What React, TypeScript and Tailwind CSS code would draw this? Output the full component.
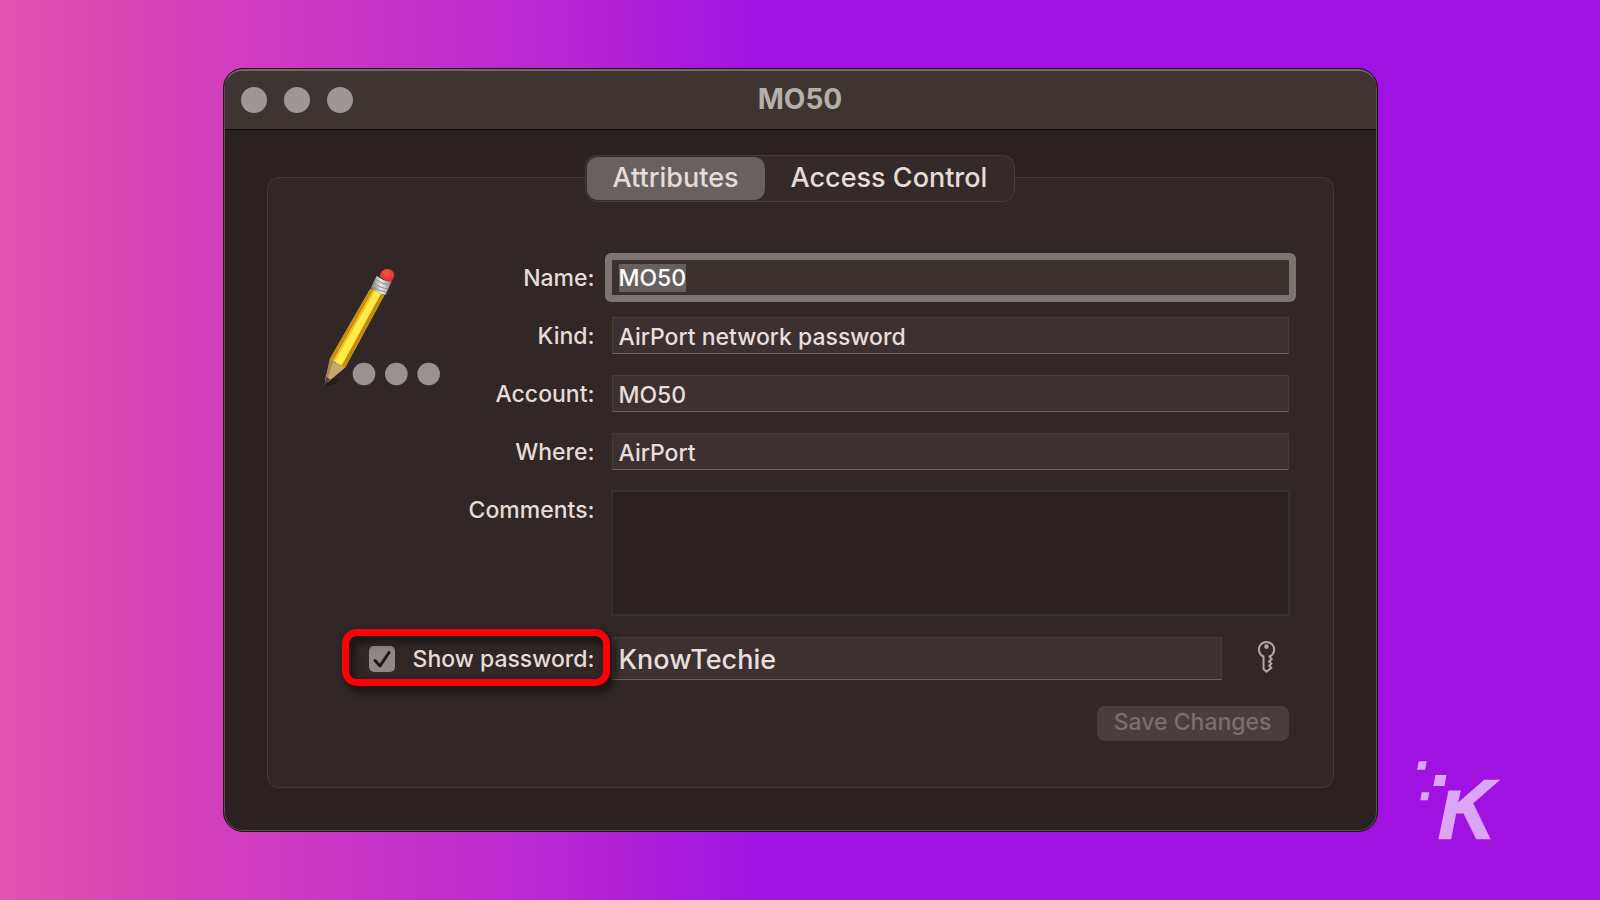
import { useEffect, useRef, useState } from "react";

const TABS = ["Attributes", "Access Control"];

const FIELD =
    "block w-full h-[37px] px-1.5 pt-0.5 bg-[#3c3130] border border-[#463c3a] border-b-[#6b615e] text-[23px] leading-[30px] font-medium text-[#e6dfdc] outline-none";

function PencilIcon() {
    return (
        <svg viewBox="42 54 360 360" className="w-[120px] h-[120px]" aria-hidden="true">
            <defs>
                <linearGradient id="metal" x1="0" y1="0" x2="1" y2="0">
                    <stop offset="0" stopColor="#6f7276" />
                    <stop offset="0.5" stopColor="#e8eaec" />
                    <stop offset="1" stopColor="#8b8d90" />
                </linearGradient>
                <radialGradient id="eraser" cx="0.5" cy="0.3" r="0.7">
                    <stop offset="0" stopColor="#f8564f" />
                    <stop offset="1" stopColor="#cf2525" />
                </radialGradient>
            </defs>
            <ellipse cx="66" cy="400" rx="22" ry="8" fill="#1f1716" opacity="0.6" transform="rotate(-25 66 400)" />
            {/* eraser and ferrule */}
            <path d="M209 84 C210 66 222 58 236 60 C250 63 256 74 251 86 L243 103 Z" fill="url(#eraser)" />
            <path d="M200 80 Q220 96 244 99 L226 138 Q202 134 182 118 Z" fill="url(#metal)" />
            <path d="M196 90 Q215 106 240 108 M191 101 Q209 117 235 120 M186 111 Q204 126 230 130" fill="none" stroke="#8a8c8f" strokeWidth="3" />
            {/* barrel */}
            <path d="M181 119 L223 139 L105 356 L60 329 Z" fill="#f7d92b" />
            <path d="M181 119 L190 123 L69 335 L60 329 Z" fill="#c88d10" />
            <path d="M190 123 L195 126 L74 338 L69 335 Z" fill="#f6bd1d" />
            <path d="M195 126 L213 134 L94 350 L74 338 Z" fill="#fdec49" />
            <path d="M213 134 L223 139 L105 356 L95 350 Z" fill="#c78a10" />
            {/* sharpened tip */}
            <path d="M60 329 Q70 329 76 342 Q86 340 92 350 Q98 349 105 356 L53 400 L45 396 Z" fill="#c9a76c" />
            <path d="M60 329 Q66 329 70 336 L50 398 L45 396 Z" fill="#a88751" />
            <path d="M49 385 L61 391 L42 410 Z" fill="#4a4644" />
            <circle cx="162" cy="375" r="34" fill="#989290" />
            <circle cx="259" cy="375" r="34" fill="#989290" />
            <circle cx="356" cy="375" r="34" fill="#989290" />
        </svg>
    );
}

function KeyIcon() {
    return (
        <svg viewBox="78 33 56 100" className="w-[19px] h-[33px]" fill="none" stroke="#b0a6a3" strokeWidth="6" strokeLinejoin="round" aria-hidden="true">
            <path d="M97 83 A23 23 0 1 1 115 83 L122 91 L113 98 L121 104 L114 111 L121 117 L106 129 L97 121 Z" />
            <circle cx="106" cy="53" r="7" fill="#b0a6a3" stroke="none" />
        </svg>
    );
}

function Watermark() {
    return (
        <svg viewBox="105 90 260 245" className="absolute right-[98px] bottom-[58px] w-[87px] h-[82px]" fill="#dba6f6" aria-hidden="true">
            <path d="M116 94 H140 L135 119 H111 Z" />
            <path d="M166 135 H199 L193 168 H160 Z" />
            <path d="M125 186 H148 L143 210 H121 Z" />
            <path d="M205 181 H242 L234 217 L312 149 H360 L279 219 L331 327 H288 L250 250 L228 250 L213 327 H175 Z" />
        </svg>
    );
}

export default function App() {
    const [tab, setTab] = useState("Attributes");
    const [name, setName] = useState("MO50");
    const [showPassword, setShowPassword] = useState(true);
    const nameRef = useRef<HTMLInputElement>(null);

    // The name is selected when the window opens
    useEffect(() => {
        nameRef.current?.focus();
        nameRef.current?.select();
    }, []);

    return (
        <main className="relative min-h-screen flex items-center justify-center p-6 bg-[linear-gradient(90deg,#e252ae_0%,#d947b5_7%,#d03dbf_15%,#c131cb_27%,#b525d4_36%,#a71add_43%,#a012e1_48%,#a012e1_100%)] font-[Inter,'Liberation_Sans',sans-serif] text-[#e3dcd9]">
            <section className="w-full max-w-[1155px] rounded-[20px] border border-[#1d1418] bg-[#2b2120] overflow-hidden">
                <div className="rounded-[19px] border border-t-2 border-[#59504c] border-t-[#716a65]">
                    <header className="grid grid-cols-[1fr_auto_1fr] items-center h-[59px] px-4 rounded-t-[18px] bg-[#3e3532] border-b border-[#0e0808]">
                        <div className="flex gap-[17px]">
                            <button type="button" aria-label="Close" className="size-[26px] rounded-full bg-[#9d9895]" />
                            <button type="button" aria-label="Minimize" className="size-[26px] rounded-full bg-[#9d9895]" />
                            <button type="button" aria-label="Zoom" className="size-[26px] rounded-full bg-[#9d9895]" />
                        </div>
                        <h1 className="pb-0.5 text-[28px] leading-8 font-bold text-[#b5afac]">MO50</h1>
                    </header>

                    <div className="px-[42px] pt-[25px] pb-[42px]">
                        <div className="relative z-10 flex justify-center">
                            <div role="tablist" className="flex h-[47px] p-px rounded-xl border border-[#463d3b] bg-[#342a29]">
                                {TABS.map((t) => (
                                    <button
                                        key={t}
                                        type="button"
                                        role="tab"
                                        aria-selected={tab === t}
                                        onClick={() => setTab(t)}
                                        className={`px-[26px] pb-0.5 rounded-[11px] text-[27px] leading-8 font-medium ${tab === t ? "bg-[#69615f]" : ""}`}
                                    >
                                        {t}
                                    </button>
                                ))}
                            </div>
                        </div>

                        <form
                            onSubmit={(e) => e.preventDefault()}
                            className="-mt-[25px] pt-[81px] pb-[46px] pl-14 pr-11 rounded-xl border border-[#443a38] bg-[#312726]"
                        >
                            <div className="grid grid-cols-[120px_151px_1fr] gap-y-[21px] text-[23px] leading-[38px] font-medium">
                                <div className="row-span-4 pt-2">
                                    <PencilIcon />
                                </div>

                                <label htmlFor="name" className="h-[37px] text-right">Name:</label>
                                <div className="h-[37px] pl-[17px]">
                                    {/* the thick border grows outward, so the text lines up with the other fields */}
                                    <div className="-mx-[7px] -my-1.5">
                                        <input
                                            id="name"
                                            ref={nameRef}
                                            value={name}
                                            onChange={(e) => setName(e.target.value)}
                                            className="block w-full h-[49px] px-[7px] pt-px rounded-md border-[7px] border-[#7c7471] bg-[#3b3230] text-[23px] leading-[30px] font-medium text-white outline-none selection:bg-[#656160] selection:text-white"
                                        />
                                    </div>
                                </div>

                                <label htmlFor="kind" className="h-[37px] text-right">Kind:</label>
                                <div className="pl-[17px]">
                                    <input id="kind" readOnly value="AirPort network password" className={FIELD} />
                                </div>

                                <label htmlFor="account" className="h-[37px] text-right">Account:</label>
                                <div className="pl-[17px]">
                                    <input id="account" defaultValue="MO50" className={FIELD} />
                                </div>

                                <label htmlFor="where" className="h-[37px] text-right">Where:</label>
                                <div className="pl-[17px]">
                                    <input id="where" defaultValue="AirPort" className={FIELD} />
                                </div>

                                <label htmlFor="comments" className="col-span-2 text-right">Comments:</label>
                                <div className="pl-[17px]">
                                    <div className="-mx-px -mt-px">
                                        <textarea id="comments" className="block w-full h-[126px] px-2 resize-none bg-[#2a2120] border-2 border-[#37302d] text-[23px] outline-none" />
                                    </div>
                                </div>

                                <div className="relative col-span-2 flex items-center justify-end gap-[18px]">
                                    <span className="relative size-[26px]">
                                        <input
                                            id="show"
                                            type="checkbox"
                                            checked={showPassword}
                                            onChange={(e) => setShowPassword(e.target.checked)}
                                            className="block size-[26px] appearance-none rounded-[5px] bg-[#8f8986]"
                                        />
                                        {showPassword && (
                                            <svg viewBox="0 0 26 26" className="absolute inset-0 pointer-events-none" fill="none" stroke="#1f1817" strokeWidth="3" strokeLinecap="round" strokeLinejoin="round">
                                                <path d="M6 14.5 L11 20 L20 6.5" />
                                            </svg>
                                        )}
                                    </span>
                                    <label htmlFor="show">Show password:</label>
                                    <span className="absolute -top-2 -bottom-1.5 left-[18px] -right-[15px] rounded-[15px] border-[7px] border-[#fb0007] drop-shadow-[4px_5px_5px_rgba(0,0,0,0.7)] pointer-events-none" />
                                </div>
                                <div className="flex items-center gap-[22px] pl-[17px]">
                                    <input
                                        aria-label="Password"
                                        type={showPassword ? "text" : "password"}
                                        defaultValue="KnowTechie"
                                        className="flex-1 min-w-0 h-[43px] px-1.5 pt-0.5 bg-[#3c3130] border border-[#463c3a] border-b-[#6b615e] text-[27px] leading-8 text-[#e6dfdc] outline-none"
                                    />
                                    <button type="button" aria-label="Password Assistant" className="flex items-center justify-center w-[45px] pb-1">
                                        <KeyIcon />
                                    </button>
                                </div>
                            </div>

                            <div className="flex justify-end mt-[26px]">
                                <button type="submit" disabled className="h-[35px] px-[17px] pb-1 rounded-lg bg-[#493e3d] text-[23px] leading-7 font-medium text-[#7a6f6d]">
                                    Save Changes
                                </button>
                            </div>
                        </form>
                    </div>
                </div>
            </section>

            <Watermark />
        </main>
    );
}
